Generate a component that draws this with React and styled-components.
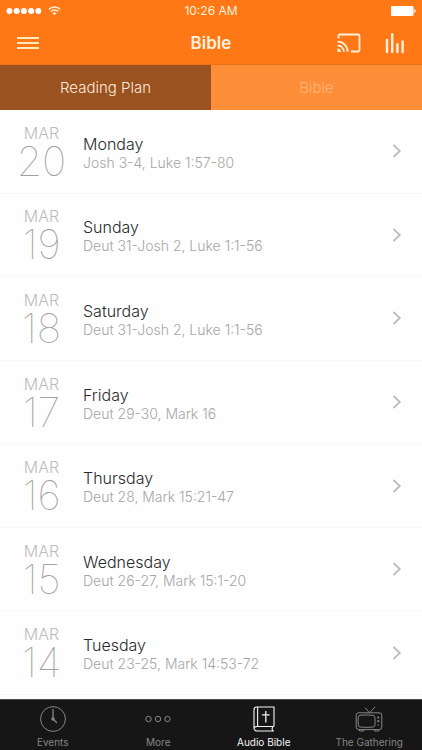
import React from "react";
import styled, { createGlobalStyle } from "styled-components";

const GlobalStyle = createGlobalStyle`
  * { box-sizing: border-box; }
  body { margin: 0; background: #fff; font-family: Inter, Roboto, sans-serif; }
  button { font-family: inherit; border: 0; padding: 0; background: none; cursor: pointer; }
`;

const Screen = styled.div`
  min-height: 100vh;
  display: flex;
  flex-direction: column;
  background: #fefefe;
`;

const TopBar = styled.header`
  background: #ff7815;
  color: #fff1dc;
  border-bottom: 1px solid #ea7018;
`;

const StatusBar = styled.div`
  height: 20px;
  padding: 1px 6px 0;
  display: grid;
  grid-template-columns: 1fr auto 1fr;
  align-items: center;
  font-size: 12px;
  line-height: 20px;
`;

const Signal = styled.div`
  display: flex;
  align-items: center;
  gap: 6px;
  svg { display: block; }
`;

const Battery = styled.svg`
  justify-self: end;
  display: block;
`;

const NavBar = styled.div`
  height: 44px;
  padding: 2px 17px 0;
  display: grid;
  grid-template-columns: 1fr auto 1fr;
  align-items: center;
`;

const Title = styled.h1`
  margin: 0;
  font-size: 17px;
  line-height: 24px;
  font-weight: 600;
`;

const Actions = styled.div`
  display: flex;
  justify-content: flex-end;
  gap: 24px;
`;

const IconButton = styled.button`
  display: flex;
  align-items: center;
  justify-self: start;
  color: inherit;
  svg { display: block; }
`;

const Segments = styled.div`
  display: grid;
  grid-template-columns: 1fr 1fr;
`;

const Segment = styled.button`
  height: 45px;
  font-size: 15px;
  line-height: 20px;
  font-weight: 300;
  color: ${(p) => (p.$active ? "#ffe9da" : "#ffb47a")};
  && { background: ${(p) => (p.$active ? "#9a5320" : "#ff8e38")}; }
`;

const List = styled.ul`
  flex: 1;
  margin: 0;
  padding: 0 0 4px;
  list-style: none;
  display: flex;
  flex-direction: column;
`;

const Item = styled.li`
  flex: 1;
  display: flex;
  border-bottom: 1px solid #f7f7f7;
`;

const Row = styled.button`
  flex: 1;
  min-height: 80px;
  display: grid;
  grid-template-columns: 83px 1fr auto;
  align-items: center;
  text-align: left;
  && { padding-right: 20px; }
`;

const DateBlock = styled.span`
  display: flex;
  flex-direction: column;
  padding-top: 3px;
  text-align: center;
`;

const Month = styled.span`
  font-size: 16px;
  line-height: 16px;
  font-weight: 300;
  color: #bcbcbc;
`;

const Day = styled.span`
  font-size: 41px;
  line-height: 40px;
  font-weight: 100;
  color: #a0a0a0;
`;

const Entry = styled.span`
  display: flex;
  flex-direction: column;
  padding-top: 3px;
`;

const Weekday = styled.span`
  font-size: 16px;
  line-height: 20px;
  font-weight: 300;
  color: #2a2a2a;
`;

const Passage = styled.span`
  font-size: 14px;
  line-height: 18px;
  font-weight: 300;
  color: #a6a6a6;
`;

const TabBar = styled.nav`
  height: 51px;
  display: grid;
  grid-template-columns: repeat(4, 1fr);
  background: #161616;
  border-top: 1px solid #4a4a4a;
`;

const Tab = styled.button`
  display: flex;
  flex-direction: column;
  align-items: center;
  justify-content: flex-start;
  gap: 2px;
  font-size: 10px;
  line-height: 12px;
  color: ${(p) => (p.$active ? "#f4f4f4" : "#868686")};
  && { padding-top: 4px; }
  svg { display: block; }
`;

const WifiIcon = () => (
  <svg width="13" height="10" viewBox="0 0 13 10" fill="none" stroke="currentColor" strokeWidth="1.5">
    <path d="M.9 3.4a8 8 0 0 1 11.2 0M2.9 5.5a5.1 5.1 0 0 1 7.2 0" />
    <path d="M4.5 7.2a2.9 2.9 0 0 1 4 0l-2 2z" fill="currentColor" stroke="none" />
  </svg>
);

const MenuIcon = () => (
  <svg width="22" height="14" viewBox="0 0 22 14" fill="none" stroke="#ffebb9" strokeWidth="2">
    <path d="M0 2h22M0 7h22M0 12h22" />
  </svg>
);

const CastIcon = () => (
  <svg width="24" height="20" viewBox="0 0 24 20" fill="none" stroke="currentColor" strokeWidth="1.8">
    <path d="M1.5 5.5V3q0-1.5 1.5-1.5h18q1.5 0 1.5 1.5v14q0 1.5-1.5 1.5h-7" />
    <path d="M.5 8.6a10 10 0 0 1 10.2 10.2M.5 12.4a6.4 6.4 0 0 1 6.4 6.4" />
    <path d="M.5 15.6a3.4 3.4 0 0 1 3.4 3.4H.5z" fill="currentColor" stroke="none" />
  </svg>
);

const LevelsIcon = () => (
  <svg width="20" height="22" viewBox="0 0 20 22" fill="none" stroke="currentColor" strokeWidth="2.4" strokeLinecap="round">
    <path d="M2 8v12M7.2 2.2V20M12.4 12.2V20M17.6 9.5V20" />
  </svg>
);

const Chevron = () => (
  <svg width="10" height="14" viewBox="0 0 10 14" fill="none" stroke="#bdbdbd" strokeWidth="1.8">
    <path d="M1.5 1 7.8 7l-6.3 6" />
  </svg>
);

const ClockIcon = () => (
  <svg width="28" height="30" viewBox="0 0 28 30" fill="none" stroke="currentColor" strokeWidth="1">
    <circle cx="14" cy="15" r="12.4" />
    <path d="M14 5v10l4 4" strokeWidth="1.3" />
    <circle cx="14" cy="15" r="1.8" fill="currentColor" stroke="none" />
  </svg>
);

const MoreIcon = () => (
  <svg width="28" height="30" viewBox="0 0 28 30" fill="none" stroke="currentColor" strokeWidth="1">
    <circle cx="4.5" cy="15" r="2.7" />
    <circle cx="14" cy="15" r="2.7" />
    <circle cx="23.5" cy="15" r="2.7" />
  </svg>
);

const BibleIcon = () => (
  <svg width="28" height="30" viewBox="0 0 28 30" fill="none" stroke="currentColor" strokeWidth="1.1">
    <path d="M24 22.5V3H7Q4 3 4 6v18.3Q4 27 7 27h17M7.6 3v19.5H24M7.6 22.5H7q-3 0-3 2.3M22.8 22.5q-1.3 2.2 0 4.5" />
    <path d="M15.8 7v11.5M12 10.8h7.6" strokeWidth="1.3" />
  </svg>
);

const TelevisionIcon = () => (
  <svg width="28" height="30" viewBox="0 0 28 30" fill="none" stroke="currentColor" strokeWidth="1">
    <rect x="1.2" y="8.8" width="25.6" height="16.8" rx="2.5" />
    <path d="M5 11.3q6.5-.8 13 0 1.7.2 1.9 2 .5 4 0 7.8-.2 1.7-1.9 1.9-6.5.8-13 0-1.5-.2-1.7-1.9-.5-4 0-7.8.2-1.8 1.7-2zM10 3.5l4.5 5.3 5.7-5.9M4 25.6l.5 1.4h4l.6-1.4M19 25.6l.6 1.4h4l.5-1.4" />
    <g fill="currentColor" stroke="none">
      <circle cx="23.3" cy="13.5" r="1.1" />
      <circle cx="23.3" cy="17.2" r="1.1" />
      <circle cx="23.3" cy="20.9" r=".7" />
    </g>
  </svg>
);

const readings = [
  [20, "Monday", "Josh 3-4, Luke 1:57-80"],
  [19, "Sunday", "Deut 31-Josh 2, Luke 1:1-56"],
  [18, "Saturday", "Deut 31-Josh 2, Luke 1:1-56"],
  [17, "Friday", "Deut 29-30, Mark 16"],
  [16, "Thursday", "Deut 28, Mark 15:21-47"],
  [15, "Wednesday", "Deut 26-27, Mark 15:1-20"],
  [14, "Tuesday", "Deut 23-25, Mark 14:53-72"],
];

const tabs = [
  ["Events", ClockIcon],
  ["More", MoreIcon],
  ["Audio Bible", BibleIcon],
  ["The Gathering", TelevisionIcon],
];

export default function App() {
  return (
    <Screen>
      <GlobalStyle />
      <TopBar>
        <StatusBar>
          <Signal>
            <svg width="36" height="8" viewBox="0 0 36 8" fill="#fff">
              {[3.5, 10.7, 17.9, 25.1, 32.3].map((x) => (
                <circle key={x} cx={x} cy="4" r="3" />
              ))}
            </svg>
            <WifiIcon />
          </Signal>
          <span>10:26 AM</span>
          <Battery width="26" height="10" viewBox="0 0 26 10" fill="#fff">
            <rect x="1" y="0" width="22.5" height="10" rx="1" />
            <path d="M24.2 3.3q1.5.3 1.5 1.7t-1.5 1.7z" />
          </Battery>
        </StatusBar>
        <NavBar>
          <IconButton aria-label="Menu"><MenuIcon /></IconButton>
          <Title>Bible</Title>
          <Actions>
            <IconButton aria-label="Cast"><CastIcon /></IconButton>
            <IconButton aria-label="Now playing"><LevelsIcon /></IconButton>
          </Actions>
        </NavBar>
      </TopBar>
      <Segments>
        <Segment $active aria-pressed="true">Reading Plan</Segment>
        <Segment aria-pressed="false">Bible</Segment>
      </Segments>
      <List>
        {readings.map(([day, weekday, passage]) => (
          <Item key={day}>
            <Row>
              <DateBlock>
                <Month>MAR</Month>
                <Day>{day}</Day>
              </DateBlock>
              <Entry>
                <Weekday>{weekday}</Weekday>
                <Passage>{passage}</Passage>
              </Entry>
              <Chevron />
            </Row>
          </Item>
        ))}
      </List>
      <TabBar>
        {tabs.map(([label, Icon]) => (
          <Tab key={label} $active={label === "Audio Bible"}>
            <Icon />
            {label}
          </Tab>
        ))}
      </TabBar>
    </Screen>
  );
}
